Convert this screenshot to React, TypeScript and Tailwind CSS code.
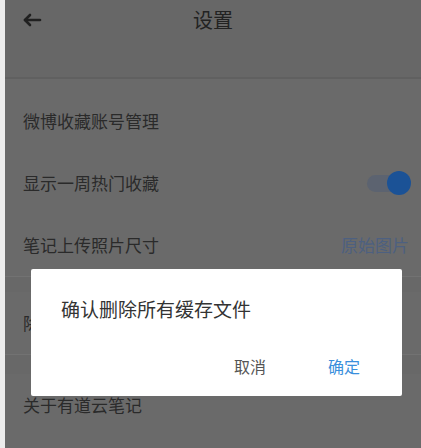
import React from 'react';

const cjk = { fontFamily: '"Noto Sans CJK SC", "Noto Sans", sans-serif' };

export default function App() {
  return (
    <div className="w-[421px] h-[448px] relative overflow-hidden flex" style={cjk}>
      {/* thin light strip on the left */}
      <div className="w-[5px] bg-[#ececec]" />

      <div className="flex-1 flex flex-col bg-[#6a6a6a]">
        {/* Header */}
        <div className="h-[79px] bg-[#676767] border-b-[2px] border-[#606060]">
          <div className="flex items-center h-[40px] pl-[17px]">
            <svg width="20" height="14" viewBox="0 0 20 14" fill="none" stroke="#202020" strokeWidth="2.6" strokeLinecap="round" strokeLinejoin="round">
              <path d="M18 7H3" />
              <path d="M8 2L3 7l5 5" />
            </svg>
            <span className="flex-1 text-center text-[20px] text-[#222] pr-[41px] ml-[4px]">设置</span>
          </div>
        </div>

        {/* Rows */}
        <div className="flex flex-col pt-[11px]">
          <div className="h-[62px] flex items-center pl-[18px] text-[17px] text-[#2a2a2a]">微博收藏账号管理</div>
          <div className="h-[62px] flex items-center justify-between pl-[18px] pr-[10px] text-[17px] text-[#2a2a2a]">
            <span>显示一周热门收藏</span>
            <div className="relative w-[44px] h-[24px] flex items-center">
              <div className="w-[34px] h-[17px] rounded-full bg-[#5c6370]" />
              <div className="absolute right-0 top-0 w-[24px] h-[24px] rounded-full bg-[#1b5296]" />
            </div>
          </div>
          <div className="h-[62px] flex items-center justify-between pl-[18px] pr-[12px] text-[17px] text-[#2a2a2a]">
            <span>笔记上传照片尺寸</span>
            <span className="text-[#4d6080]">原始图片</span>
          </div>
          <div className="h-[16px] border-t border-[#727272] bg-[#686868]" />
          <div className="h-[62px] flex items-center pl-[18px] text-[17px] text-[#2a2a2a]">除缓存</div>
          <div className="h-[20px] border-t border-[#727272] bg-[#686868]" />
          <div className="h-[62px] flex items-center pl-[18px] text-[17px] text-[#2a2a2a]">关于有道云笔记</div>
        </div>
      </div>

      {/* Dialog */}
      <div className="absolute left-[31px] top-[269px] w-[371px] h-[127px] bg-white rounded-[2px] flex flex-col">
        <div className="pl-[30px] pt-[26px] text-[19px] leading-[28px] text-[#333]">确认删除所有缓存文件</div>
        <div className="flex justify-end items-center mt-[31px] pr-[42px] gap-[62px] text-[16px] leading-[24px]">
          <span className="text-[#555]">取消</span>
          <span className="text-[#3a8fdc]">确定</span>
        </div>
      </div>
    </div>
  );
}
